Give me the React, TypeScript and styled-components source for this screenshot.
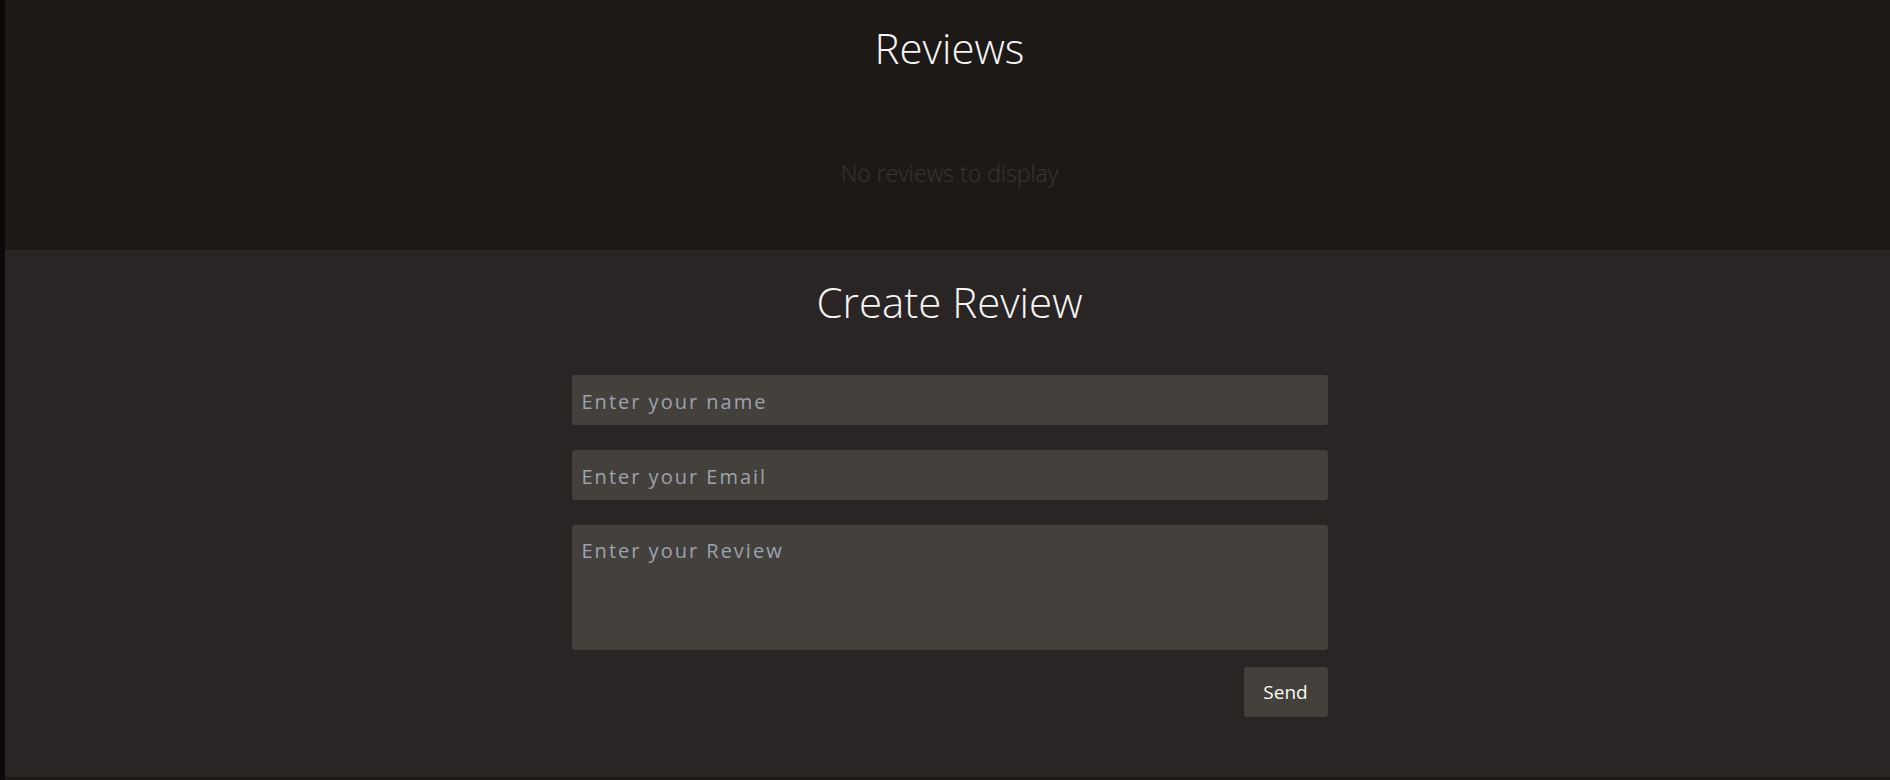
import React from "react";
import styled, { createGlobalStyle } from "styled-components";

const GlobalStyle = createGlobalStyle`
  html, body {
    margin: 0;
    padding: 0;
    background: #0a0a0a;
  }
  body {
    font-family: "Open Sans", "Noto Sans", sans-serif;
  }
`;

const Page = styled.div`
  display: flex;
  min-height: 780px;
  padding-left: 5px;
  background: #0a0a0a;
`;

const Main = styled.main`
  flex: 1;
  display: flex;
  flex-direction: column;
`;

const ReviewsSection = styled.section`
  height: 250px;
  background: #1d1917;
  display: flex;
  flex-direction: column;
  align-items: center;
  box-sizing: border-box;
  padding: 18px 0 0 4px;
`;

const Heading = styled.h2`
  margin: 0;
  font-family: "Open Sans", sans-serif;
  font-weight: 300;
  font-size: 42px;
  line-height: 60px;
  color: #f5f5f4;
`;

const EmptyText = styled.p`
  margin: 79px 0 0;
  font-weight: 300;
  font-size: 23px;
  color: #3a3634;
`;

const CreateSection = styled.section`
  height: 527px;
  background: #292524;
  display: flex;
  flex-direction: column;
  align-items: center;
  box-sizing: border-box;
  padding: 22px 0 0 4px;
`;

const Form = styled.form`
  width: 756px;
  margin-top: 43px;
  display: flex;
  flex-direction: column;
  gap: 25px;
`;

const fieldStyles = `
  box-sizing: border-box;
  width: 100%;
  border: none;
  border-radius: 3px;
  background: #44403c;
  color: #e7e5e4;
  font-family: "Open Sans", sans-serif;
  font-size: 20px;
  letter-spacing: 2px;
  padding: 0 10px;
  outline: none;
  &::placeholder {
    color: #9ca3af;
  }
`;

const Input = styled.input`
  ${fieldStyles}
  height: 50px;
  padding-top: 2px;
`;

const TextArea = styled.textarea`
  ${fieldStyles}
  height: 125px;
  padding-top: 12px;
  resize: none;
`;

const Actions = styled.div`
  display: flex;
  justify-content: flex-end;
  margin-top: -8px;
`;

const SendButton = styled.button`
  width: 84px;
  height: 50px;
  border: none;
  border-radius: 3px;
  background: #44403c;
  color: #fafaf9;
  font-family: "Open Sans", sans-serif;
  font-size: 19px;
  cursor: pointer;
`;

const BottomEdge = styled.div`
  height: 3px;
  background: #1d1917;
`;

export default function App() {
  return (
    <>
      <GlobalStyle />
      <Page>
        <Main>
          <ReviewsSection>
            <Heading>Reviews</Heading>
            <EmptyText>No reviews to display</EmptyText>
          </ReviewsSection>
          <CreateSection>
            <Heading>Create Review</Heading>
            <Form onSubmit={(e) => e.preventDefault()}>
              <Input type="text" placeholder="Enter your name" />
              <Input type="email" placeholder="Enter your Email" />
              <TextArea placeholder="Enter your Review" />
              <Actions>
                <SendButton type="submit">Send</SendButton>
              </Actions>
            </Form>
          </CreateSection>
          <BottomEdge />
        </Main>
      </Page>
    </>
  );
}
